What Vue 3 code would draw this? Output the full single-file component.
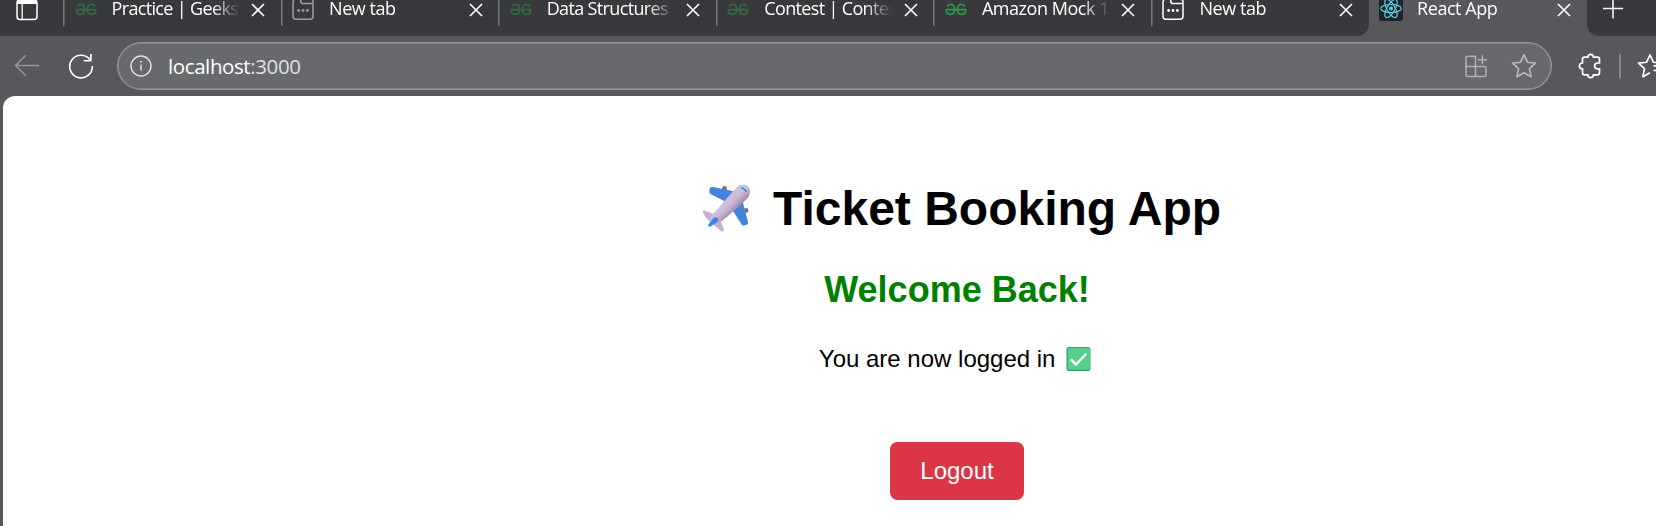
<script setup>
const tabs = [
  { title: 'Practice | Geeksf', icon: 'gfg', dim: true, tight: true },
  { title: 'New tab', icon: 'page', dim: true },
  { title: 'Data Structures', icon: 'gfg', dim: true, tight: true },
  { title: 'Contest | Contes', icon: 'gfg', dim: true, tight: true },
  { title: 'Amazon Mock 1', icon: 'gfg', dim: false },
  { title: 'New tab', icon: 'page', dim: false },
  { title: 'React App', icon: 'react', active: true },
]
</script>

<template>
  <div class="browser">
    <header class="strip">
      <div class="lead">
        <svg class="workspace" width="22" height="22" viewBox="0 0 22 22">
          <rect x="1" y="1" width="20" height="19.5" rx="3" fill="none" stroke="#fff" stroke-width="1.5" />
          <path d="M1 1H21V5H1Z" fill="#fff" />
          <path d="M6.2 5V20" stroke="#fff" stroke-width="1.3" />
        </svg>
      </div>
      <div
        v-for="(tab, i) in tabs"
        :key="i"
        class="tab"
        :class="{ active: tab.active, before: i === 5 }"
      >
        <div class="favicon" :class="{ dim: tab.dim }">
          <svg v-if="tab.icon === 'gfg'" width="22" height="24" viewBox="0 0 22 24">
            <path
              d="M.5 9.6H21.5M2 6.5C2.8 5 4.2 4.4 5.7 4.4C8.2 4.4 9.6 6.3 9.6 9.3C9.6 12.5 8 14.4 5.4 14.4C3 14.4 1.2 12.6 1.2 9.6M20 6.5C19.2 5 17.8 4.4 16.3 4.4C13.8 4.4 12.4 6.3 12.4 9.3C12.4 12.5 14 14.4 16.6 14.4C19 14.4 20.8 12.6 20.8 9.6"
              fill="none" stroke="#2f9a4b" stroke-width="1.7"
            />
          </svg>
          <svg v-else-if="tab.icon === 'page'" width="22" height="24" viewBox="0 0 22 24">
            <path
              d="M8.8 -2V1.2Q8.8 3.6 11.2 3.6H20.8M1 2V16.2Q1 19.2 4 19.2H18Q21 19.2 21 16.2V2Q21 -1 18 -1M1 2Q1 .5 2.5 -.8"
              fill="none" stroke="#fff" stroke-width="1.5"
            />
            <g fill="#fff">
              <circle cx="6.6" cy="10.5" r="1.4" /><circle cx="11" cy="10.5" r="1.4" /><circle cx="15.4" cy="10.5" r="1.4" />
            </g>
          </svg>
          <svg v-else width="24" height="24" viewBox="0 0 24 24">
            <rect y="-6" width="24" height="27" rx="3" fill="#222326" />
            <g fill="none" stroke="#5bcbe8" stroke-width="1.2">
              <ellipse cx="12" cy="8.5" rx="10.2" ry="4" />
              <ellipse cx="12" cy="8.5" rx="10.2" ry="4" transform="rotate(60 12 8.5)" />
              <ellipse cx="12" cy="8.5" rx="10.2" ry="4" transform="rotate(120 12 8.5)" />
            </g>
            <circle cx="12" cy="8.5" r="2" fill="#5bcbe8" />
          </svg>
        </div>
        <span class="title" :class="{ tight: tab.tight }">{{ tab.title }}</span>
        <svg class="close" width="14" height="14" viewBox="0 0 14 14">
          <path d="M1 1L13 13M13 1L1 13" stroke="#fff" stroke-width="1.6" />
        </svg>
      </div>
      <div class="rest">
        <svg width="22" height="22" viewBox="0 0 22 22">
          <path d="M1 11.5H21M11 1.5V21.5" stroke="#fff" stroke-width="1.5" />
        </svg>
      </div>
    </header>

    <nav class="toolbar">
      <svg class="back" width="26" height="24" viewBox="0 0 26 24">
        <path d="M25 11.5H1.5M12 1.2L1.5 11.5L12 21.8" fill="none" stroke="#95969a" stroke-width="1.5" />
      </svg>
      <svg class="reload" width="26" height="26" viewBox="0 0 26 26">
        <path d="M22.2 7A11.3 11.3 0 1 0 24.3 13M22.9 1V7.8H15.8" fill="none" stroke="#fff" stroke-width="1.6" />
      </svg>
      <div class="address">
        <svg class="info" width="22" height="22" viewBox="0 0 22 22">
          <circle cx="11" cy="11" r="10" fill="none" stroke="#e3e3e5" stroke-width="1.4" />
          <path d="M11 9.5V15.5" stroke="#e3e3e5" stroke-width="1.5" />
          <circle cx="11" cy="6.8" r="1" fill="#e3e3e5" />
        </svg>
        <span class="url">localhost<span class="port">:3000</span></span>
        <svg class="apps" width="24" height="24" viewBox="0 0 24 24">
          <path
            d="M11.5 12.5V2.2H4Q2 2.2 2 4.2V20.5Q2 22.5 4 22.5H20Q22 22.5 22 20.5V14.5Q22 12.5 20 12.5H2M11.5 12.5V22.5M18.4 1.2V10.2M13.9 5.7H22.9"
            fill="none" stroke="#b0b1b3" stroke-width="1.5"
          />
        </svg>
        <svg class="star" width="26" height="26" viewBox="0 0 26 26">
          <path
            d="M13 1.8L16.4 9.2L24.5 10.1L18.5 15.7L20.1 23.7L13 19.7L5.9 23.7L7.5 15.7L1.5 10.1L9.6 9.2Z"
            fill="none" stroke="#b9babc" stroke-width="1.6" stroke-linejoin="round"
          />
        </svg>
      </div>
      <svg class="puzzle" width="24" height="26" viewBox="0 0 24 26">
        <path
          d="M6.5 4.2H9.8C9.8 0.4 15.4 0.4 15.4 4.2H19.5Q21.5 4.2 21.5 6.2V10H19.7C15.6 10 15.6 15.8 19.7 15.8H21.5V19.8Q21.5 21.8 19.5 21.8H15.4C15.4 25.6 9.8 25.6 9.8 21.8H6.5Q4.5 21.8 4.5 19.8V15.8C0.4 15.8 0.4 10 4.5 10V6.2Q4.5 4.2 6.5 4.2Z"
          fill="none" stroke="#fff" stroke-width="1.7"
        />
      </svg>
      <i class="rule"></i>
      <svg class="favorites" width="27" height="26" viewBox="0 0 27 26">
        <path
          d="M24.5 10.1L16.4 9.2L13 1.8L9.6 9.2L1.5 10.1L7.5 15.7L5.9 23.7L13 19.7M16.5 12.9H27M16.5 17.5H27"
          fill="none" stroke="#fff" stroke-width="1.6" stroke-linejoin="round"
        />
      </svg>
    </nav>

    <main class="viewport">
      <div class="content">
        <h1>
          <svg class="plane" width="66" height="50" viewBox="0 0 66 50">
            <defs>
              <linearGradient id="hull" x1="26" y1="14" x2="40" y2="28" gradientUnits="userSpaceOnUse">
                <stop offset="0" stop-color="#d9cae2" /><stop offset="0.65" stop-color="#cbb9d5" /><stop offset="1" stop-color="#a391ae" />
              </linearGradient>
            </defs>
            <circle cx="31.5" cy="5.5" r="2.4" fill="#75717c" /><circle cx="53" cy="27.5" r="2.4" fill="#75717c" />
            <path d="M17 5Q18 3.5 20 4L42 8.5L33 19L17.5 11Q15.5 9 17 5Z" fill="#4384dc" />
            <path d="M49 16L55 39Q55.5 41 53.5 42L50.5 42.5Q49 42.5 48.3 41L38 25Z" fill="#4384dc" />
            <path d="M10 29Q9 27 11.5 27.5L21 31L27 37L31 46Q31 49.5 28.5 48.2L18 40Q11 33 10 29Z" fill="#c4b1d1" />
            <path d="M20 31L43 5Q48 -.3 54 2.5Q58.8 6 56 13Q53 18 29 38Q22 42 18.5 39Q16 36 20 31Z" fill="url(#hull)" />
            <path d="M15 42L20.5 35Q22.5 33.5 24.5 35Q26 37 24 39L18.5 43Q15 44.5 15 42Z" fill="#3485ef" />
            <path d="M49.3 3.5Q53.5 4 55.3 8.5L53 10Q51 6.5 48 5.6Z" fill="#cfe9f5" />
            <path d="M48.5 4.5Q52 6 54 9" fill="none" stroke="#2388b8" stroke-width="1.7" />
          </svg><span class="name">Ticket Booking App</span>
        </h1>
        <h2>Welcome Back!</h2>
        <p>
          <span>You are now logged in</span>
          <svg class="check" width="33" height="24" viewBox="0 0 33 24">
            <rect x="4.5" width="24" height="24" rx="2.5" fill="#35a36c" />
            <rect x="5.8" y="1" width="22.2" height="21.8" rx="2" fill="#55d18c" />
            <path d="M9.5 13L14 17.5L23.5 7.5" fill="none" stroke="#fff" stroke-width="2.5" stroke-linecap="round" stroke-linejoin="round" />
          </svg>
        </p>
        <button type="button">Logout</button>
      </div>
    </main>
  </div>
</template>

<style>
body {
  margin: 0;
  overflow: hidden;
}
</style>

<style scoped>
.browser {
  width: 100vw;
  height: 100vh;
  overflow: hidden;
  display: flex;
  flex-direction: column;
  background: #57585c;
  color: #fff;
  font-family: "Open Sans", "Noto Sans", sans-serif;
}
svg { display: block; flex: none; }
.strip {
  display: flex;
  height: 36px;
  flex: none;
}
.lead {
  width: 63px;
  flex: none;
  background: #38393c;
}
.workspace { margin: -1px 0 0 16px; }
.tab {
  width: 217.6px;
  height: 36px;
  box-sizing: border-box;
  flex: none;
  display: flex;
  padding-left: 12px;
  background: linear-gradient(#77787b, #77787b) 0 0 / 1.5px 26px no-repeat #38393c;
}
.tab.before { border-bottom-right-radius: 12px; }
.tab.active { background: #57585c; }
.favicon { width: 37px; margin-left: -0.5px; }
.favicon.dim { opacity: 0.5; }
.active .favicon { margin-left: -1.5px; width: 38px; }
.title {
  width: 129px;
  height: 24px;
  line-height: 24px;
  margin-top: -4px;
  font-size: 18px;
  letter-spacing: -0.45px;
  white-space: nowrap;
  mask-image: linear-gradient(90deg, #000 100px, transparent 128px);
}
.title.tight { letter-spacing: -0.65px; }
.close { margin: 3px 0 0 10.5px; }
.rest {
  flex: 1;
  background: #38393c;
  border-bottom-left-radius: 12px;
  padding-left: 15px;
  margin-left: 1px;
}
.rest svg { margin-top: -3px; }
.toolbar {
  height: 60px;
  flex: none;
  display: flex;
  align-items: center;
  padding-left: 14px;
}
.reload { margin-left: 28px; }
.address {
  width: 1435px;
  height: 48px;
  box-sizing: border-box;
  flex: none;
  margin-left: 23px;
  border: 1px solid #96979a;
  box-shadow: inset 0 0 0 0.5px #96979a;
  border-radius: 24px;
  background: #68696d;
  display: flex;
  align-items: center;
  padding: 0 14px 0 12px;
}
.url {
  margin-left: 16px;
  flex: 1;
  font-size: 20.5px;
  line-height: 28px;
  letter-spacing: -0.4px;
}
.port { color: #e0e0e2; }
.star { margin-left: 23px; }
.puzzle { margin-left: 25.5px; }
.rule {
  width: 1.5px;
  height: 24px;
  margin-left: 17.5px;
  flex: none;
  background: #858689;
}
.favorites { margin-left: 16px; }
.viewport {
  flex: 1;
  margin-left: 3px;
  background: #fff;
  border-top-left-radius: 12px;
  overflow: hidden;
  color: #000;
  font-family: "Liberation Sans", Arial, sans-serif;
}
.content {
  width: 1908px;
  display: flex;
  flex-direction: column;
  align-items: center;
  padding-top: 85px;
}
h1, h2, p { margin: 0; white-space: nowrap; }
h1 {
  display: flex;
  gap: 14px;
  font-size: 48px;
  line-height: 56px;
}
.plane { margin-top: 2px; }
h2 {
  margin-top: 32px;
  font-size: 36px;
  line-height: 42px;
  color: #008000;
}
p {
  margin-top: 34px;
  display: flex;
  gap: 6.7px;
  font-size: 24px;
  line-height: 28px;
}
.check { margin-top: 1.5px; }
button {
  width: 134px;
  height: 58px;
  margin-top: 69px;
  padding: 0;
  border: 0;
  border-radius: 7.5px;
  background: #dc3545;
  color: #fff;
  font: 24px/28px "Liberation Sans", Arial, sans-serif;
}
</style>
